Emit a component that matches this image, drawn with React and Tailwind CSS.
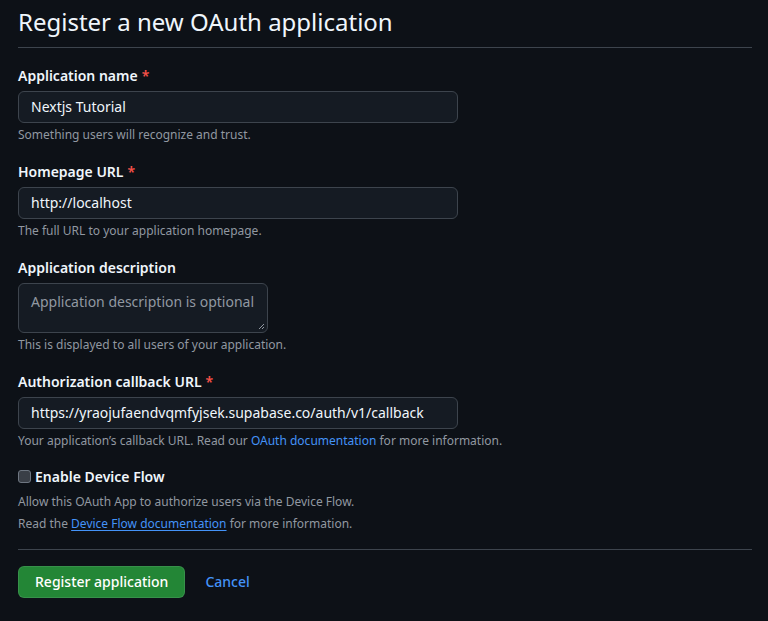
import React from 'react';

const font = { fontFamily: '"Noto Sans", "Liberation Sans", sans-serif' };

function Label({ children, required }) {
  return (
    <label className="block text-sm leading-[21px] font-semibold text-[#f0f6fc]">
      {children}
      {required && <span className="ml-1 text-[#f85149]">*</span>}
    </label>
  );
}

function Note({ children }) {
  return <p className="mt-[3px] text-xs leading-[18px] text-[#9198a1]">{children}</p>;
}

function Field({ label, required, value, note }) {
  return (
    <div className="mb-[17px]">
      <Label required={required}>{label}</Label>
      <div className="mt-[5px] flex h-8 w-[440px] items-center rounded-md border border-[#3d444d] bg-[#151b23] px-3 text-sm text-[#f0f6fc]">
        {value}
      </div>
      <Note>{note}</Note>
    </div>
  );
}

export default function App() {
  return (
    <div className="min-h-[621px] bg-[#0d1117] pl-[18px] pr-4 pt-[7px]" style={font}>
      <h1 className="border-b border-[#3d444d] pb-[10px] text-2xl leading-[30px] font-normal text-[#f0f6fc]">
        Register a new OAuth application
      </h1>

      <div className="mt-[17px]">
        <Field
          label="Application name"
          required
          value="Nextjs Tutorial"
          note="Something users will recognize and trust."
        />
        <Field
          label="Homepage URL"
          required
          value="http://localhost"
          note="The full URL to your application homepage."
        />

        <div className="mb-[17px]">
          <Label>Application description</Label>
          <div className="relative mt-[5px] h-[50px] w-[250px] rounded-md border border-[#3d444d] bg-[#151b23] px-3 py-2 text-sm leading-5 text-[#9198a1]">
            Application description is optional
            <svg className="absolute bottom-[2px] right-[2px]" width="7" height="7" viewBox="0 0 7 7">
              <path d="M1 6 L6 1 M4 6 L6 4" stroke="#9198a1" strokeWidth="1" />
            </svg>
          </div>
          <Note>This is displayed to all users of your application.</Note>
        </div>

        <div className="mb-4">
          <Label required>Authorization callback URL</Label>
          <div className="mt-[5px] flex h-8 w-[440px] items-center rounded-md border border-[#3d444d] bg-[#151b23] px-3 text-sm text-[#f0f6fc]">
            https://yraojufaendvqmfyjsek.supabase.co/auth/v1/callback
          </div>
          <Note>
            Your application’s callback URL. Read our{' '}
            <a className="text-[#4493f8]">OAuth documentation</a> for more information.
          </Note>
        </div>

        <div className="flex items-center gap-1 text-sm leading-[21px] font-semibold text-[#f0f6fc]">
          <span className="h-[13px] w-[13px] rounded-[3px] border border-[#6e7681] bg-[#3a3f47]" />
          Enable Device Flow
        </div>
        <p className="mt-[4px] text-xs leading-[22px] text-[#9198a1]">
          Allow this OAuth App to authorize users via the Device Flow.
        </p>
        <p className="text-xs leading-[22px] text-[#9198a1]">
          Read the{' '}
          <a className="text-[#4493f8] underline underline-offset-2">Device Flow documentation</a> for
          more information.
        </p>

        <div className="mt-[14px] border-t border-[#3d444d]" />

        <div className="mt-4 flex items-center">
          <button className="h-8 rounded-md border border-[#f0f6fc1a] bg-[#238636] px-4 text-sm font-medium text-white">
            Register application
          </button>
          <a className="ml-5 text-sm font-medium text-[#4493f8]">Cancel</a>
        </div>
      </div>
    </div>
  );
}
